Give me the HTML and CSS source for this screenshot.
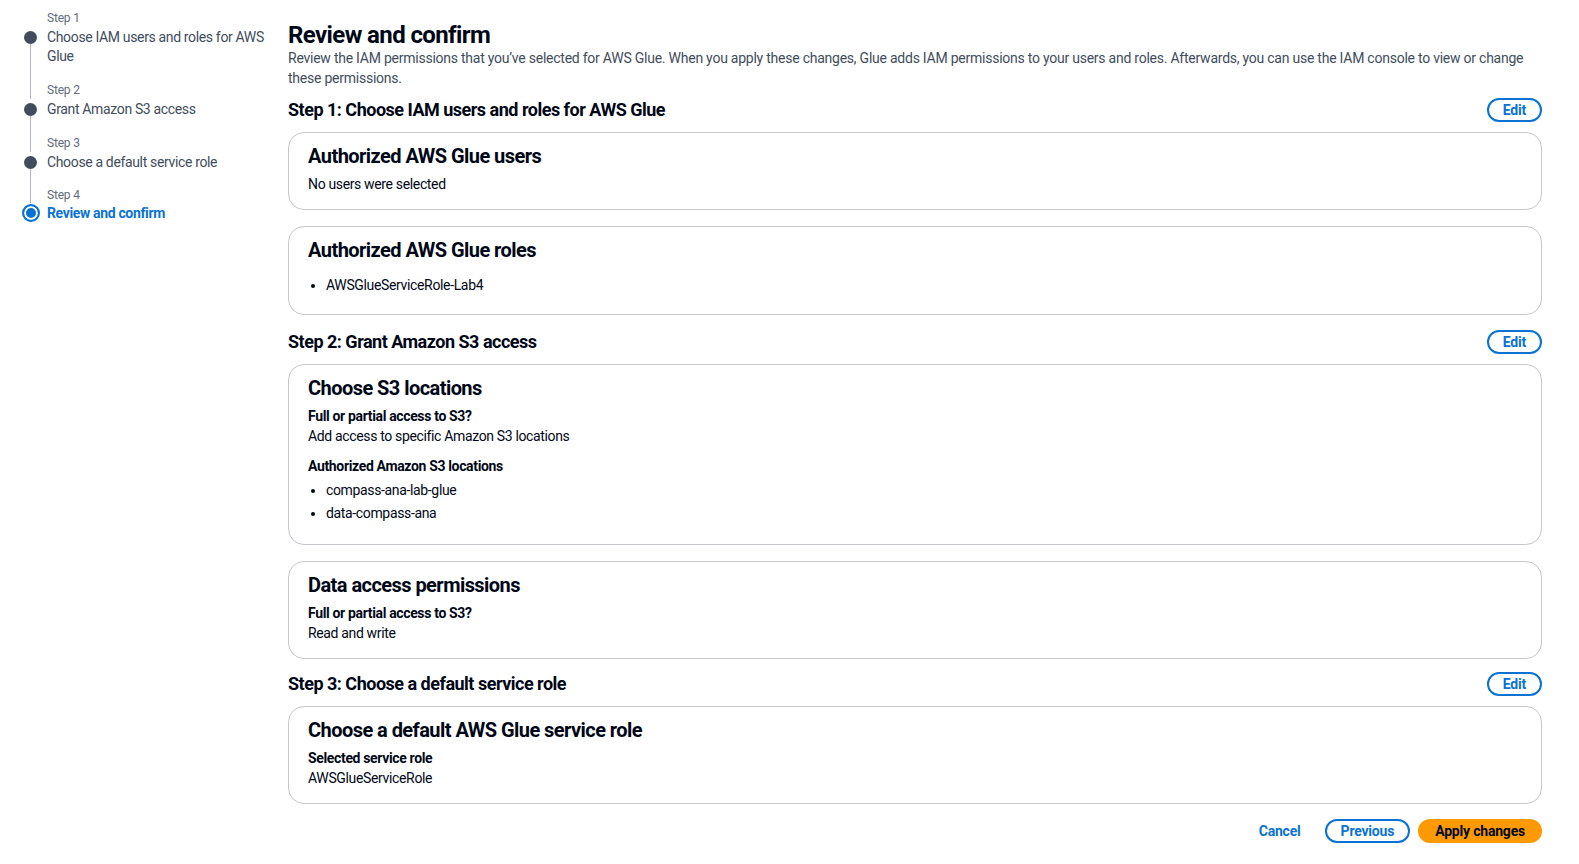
FILE: index.html
```html
<!DOCTYPE html>
<html lang="en">
<head>
<meta charset="utf-8">
<title>Review and confirm</title>
<link rel="stylesheet" href="styles.css">
</head>
<body>
<div class="page">
  <nav class="steps">
    <ol class="step-list">
      <li class="step first">
        <span class="rail rail-top"></span>
        <span class="step-label">Step 1</span>
        <span class="marker"><span class="dot"></span><span class="rail"></span></span>
        <span class="step-title">Choose IAM users and roles for AWS Glue</span>
      </li>
      <li class="step">
        <span class="rail rail-top"></span>
        <span class="step-label">Step 2</span>
        <span class="marker"><span class="dot"></span><span class="rail"></span></span>
        <span class="step-title">Grant Amazon S3 access</span>
      </li>
      <li class="step">
        <span class="rail rail-top"></span>
        <span class="step-label">Step 3</span>
        <span class="marker"><span class="dot"></span><span class="rail"></span></span>
        <span class="step-title">Choose a default service role</span>
      </li>
      <li class="step last active">
        <span class="rail rail-top"></span>
        <span class="step-label">Step 4</span>
        <span class="marker"><span class="dot ring"></span></span>
        <span class="step-title">Review and confirm</span>
      </li>
    </ol>
  </nav>

  <main class="main">
    <h1 class="title">Review and confirm</h1>
    <p class="desc">Review the IAM permissions that you’ve selected for AWS Glue. When you apply these changes, Glue adds IAM permissions to your users and roles. Afterwards, you can use the IAM console to view or change these permissions.</p>

    <section class="section first-section">
      <div class="section-head">
        <h2 class="section-title">Step 1: Choose IAM users and roles for AWS Glue</h2>
        <button class="btn btn-normal">Edit</button>
      </div>
      <div class="card">
        <h3 class="card-title">Authorized AWS Glue users</h3>
        <p class="value">No users were selected</p>
      </div>
      <div class="card">
        <h3 class="card-title">Authorized AWS Glue roles</h3>
        <ul class="bullets after-title">
          <li>AWSGlueServiceRole-Lab4</li>
        </ul>
      </div>
    </section>

    <section class="section">
      <div class="section-head">
        <h2 class="section-title">Step 2: Grant Amazon S3 access</h2>
        <button class="btn btn-normal">Edit</button>
      </div>
      <div class="card">
        <h3 class="card-title">Choose S3 locations</h3>
        <div class="pair">
          <div class="label">Full or partial access to S3?</div>
          <div class="value">Add access to specific Amazon S3 locations</div>
        </div>
        <div class="pair spaced">
          <div class="label">Authorized Amazon S3 locations</div>
          <ul class="bullets after-label">
            <li>compass-ana-lab-glue</li>
            <li>data-compass-ana</li>
          </ul>
        </div>
      </div>
      <div class="card">
        <h3 class="card-title">Data access permissions</h3>
        <div class="pair">
          <div class="label">Full or partial access to S3?</div>
          <div class="value">Read and write</div>
        </div>
      </div>
    </section>

    <section class="section last-section">
      <div class="section-head">
        <h2 class="section-title">Step 3: Choose a default service role</h2>
        <button class="btn btn-normal">Edit</button>
      </div>
      <div class="card">
        <h3 class="card-title">Choose a default AWS Glue service role</h3>
        <div class="pair">
          <div class="label">Selected service role</div>
          <div class="value">AWSGlueServiceRole</div>
        </div>
      </div>
    </section>

    <div class="actions">
      <button class="btn btn-link">Cancel</button>
      <button class="btn btn-normal btn-prev">Previous</button>
      <button class="btn btn-primary">Apply changes</button>
    </div>
  </main>
</div>
</body>
</html>
```

FILE: styles.css
```css
* { box-sizing: border-box; }

html, body {
  margin: 0;
  padding: 0;
  background: #ffffff;
}

body {
  font-family: Roboto, "Liberation Sans", Arial, sans-serif;
  font-size: 14px;
  line-height: 20px;
  letter-spacing: -0.35px;
  color: #000716;
}

.page {
  display: grid;
  grid-template-columns: 288px 1254px;
  width: 1579px;
}

/* ---------- side navigation ---------- */
.steps {
  padding: 9px 18px 0 22px;
}

.step-list {
  list-style: none;
  margin: 0;
  padding: 0;
}

.step {
  display: grid;
  grid-template-columns: 17px 1fr;
  column-gap: 8px;
  grid-template-areas:
    "rt label"
    "mk title";
}

.rail-top { grid-area: rt; }
.step-label { grid-area: label; }
.marker { grid-area: mk; }
.step-title { grid-area: title; }

.rail {
  display: block;
  width: 1px;
  background: #b4b4bb;
  margin: 0 auto;
  flex: 1;
}

.first .rail-top { visibility: hidden; }

.rail-top {
  height: 100%;
}

.step-label {
  font-size: 12px;
  line-height: 18px;
  color: #5f6b7a;
  letter-spacing: -0.2px;
}

.marker {
  display: flex;
  flex-direction: column;
  align-items: center;
}

.dot {
  display: block;
  width: 13px;
  height: 13px;
  border-radius: 50%;
  background: #414d5c;
  margin-top: 4px;
  flex: none;
}

.dot.ring {
  width: 18px;
  height: 18px;
  margin-top: 1px;
  background: #0972d3;
  border: 2px solid #0972d3;
  box-shadow: inset 0 0 0 2px #ffffff;
}

.step-title {
  color: #414d5c;
  line-height: 19px;
  padding: 1px 0 15px;
}

.last .step-title { padding-bottom: 0; }
.last .step-label { line-height: 16px; }

.active .step-title {
  color: #0972d3;
  font-weight: 700;
}

/* ---------- main ---------- */
.main {
  padding-top: 21px;
}

.title {
  margin: 0;
  font-size: 24px;
  line-height: 28px;
  font-weight: 700;
  letter-spacing: -0.6px;
  color: #000716;
}

.desc {
  margin: 0;
  color: #414d5c;
  font-size: 14px;
  line-height: 19.5px;
  letter-spacing: -0.24px;
}

.section { margin-top: 15px; }
.first-section { margin-top: 10px; }
.last-section { margin-top: 13px; }

.section-head {
  display: flex;
  align-items: center;
  justify-content: space-between;
  height: 24px;
  margin-bottom: 10px;
}

.section-title {
  margin: 0;
  font-size: 18px;
  line-height: 24px;
  font-weight: 700;
  letter-spacing: -0.5px;
}

.card {
  border: 1px solid #c6c6cd;
  border-radius: 16px;
  padding: 9px 19px 15px;
  background: #fff;
}

.card + .card { margin-top: 16px; }

.card-title {
  margin: 0 0 4px;
  font-size: 20px;
  line-height: 28px;
  font-weight: 700;
  letter-spacing: -0.55px;
}

.value { margin: 0; }

.label {
  font-weight: 700;
}

.pair.spaced { margin-top: 10px; }

.bullets {
  margin: 0;
  padding-left: 18px;
}

.bullets li + li { margin-top: 3px; }

.bullets.after-title { margin: 11px 0 4px; }
.bullets.after-label { margin: 4px 0 6px; }

/* ---------- buttons ---------- */
.btn {
  font-family: inherit;
  font-size: 14px;
  font-weight: 700;
  letter-spacing: -0.2px;
  line-height: 20px;
  height: 24px;
  border-radius: 20px;
  cursor: pointer;
  white-space: nowrap;
}

.btn-normal {
  background: #ffffff;
  color: #0972d3;
  border: 2px solid #0972d3;
  padding: 0 14px;
}

.btn-link {
  background: transparent;
  border: 2px solid transparent;
  color: #0972d3;
  padding: 0 8px;
}

.btn-primary {
  background: #ff9900;
  border: 2px solid #ff9900;
  color: #000716;
  padding: 0 15px;
}

.actions {
  display: flex;
  justify-content: flex-end;
  align-items: center;
  margin-top: 15px;
  gap: 8px;
}

.btn-prev { margin-left: 6px; }
```
